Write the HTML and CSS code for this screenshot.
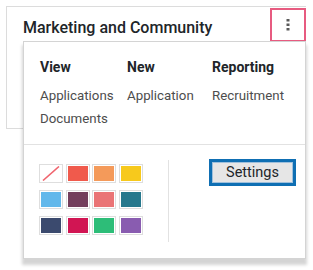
FILE: index.html
```html
<!DOCTYPE html>
<html>
<head>
<meta charset="utf-8">
<link rel="stylesheet" href="styles.css">
</head>
<body>
<div class="card">
  <div class="card-head">
    <h2 class="title">Marketing and Community</h2>
    <button class="kebab" aria-label="More">
      <svg width="4" height="12" viewBox="0 0 4 12"><rect x="0.5" y="0" width="3" height="2.5" fill="#5a5a5a"/><rect x="0.5" y="4.5" width="3" height="2.5" fill="#5a5a5a"/><rect x="0.5" y="9" width="3" height="2.5" fill="#5a5a5a"/></svg>
    </button>
  </div>
  <div class="menu">
    <div class="links">
      <div class="col">
        <div class="col-title">View</div>
        <a class="item">Applications</a>
        <a class="item">Documents</a>
      </div>
      <div class="col">
        <div class="col-title">New</div>
        <a class="item">Application</a>
      </div>
      <div class="col">
        <div class="col-title">Reporting</div>
        <a class="item">Recruitment</a>
      </div>
    </div>
    <div class="hsep"></div>
    <div class="bottom">
      <ul class="colors">
        <li class="sw none"><svg width="20" height="15" viewBox="0 0 20 15"><line x1="2" y1="14.5" x2="18" y2="0.5" stroke="#f0646e" stroke-width="1.6"/></svg></li>
        <li class="sw c1"></li>
        <li class="sw c2"></li>
        <li class="sw c3"></li>
        <li class="sw c4"></li>
        <li class="sw c5"></li>
        <li class="sw c6"></li>
        <li class="sw c7"></li>
        <li class="sw c8"></li>
        <li class="sw c9"></li>
        <li class="sw c10"></li>
        <li class="sw c11"></li>
      </ul>
      <div class="vsep"></div>
      <div class="settings-wrap">
        <button class="settings">Settings</button>
      </div>
    </div>
  </div>
</div>
</body>
</html>
```
FILE: styles.css
```css
html, body {
  margin: 0;
  padding: 0;
  background: #fff;
}
html { height: 270px; }
body {
  box-sizing: border-box;
  height: 270px;
  padding: 6px 7px 0 6px;
  font-family: Roboto, "Noto Sans", sans-serif;
  color: #212529;
}
.card {
  position: relative;
  height: 121px;
  border: 1px solid #dcdcdc;
  border-right: none;
  background: #fff;
}
.card-head {
  display: flex;
  justify-content: space-between;
  align-items: flex-start;
}
.title {
  margin: 0;
  padding: 11px 0 0 16px;
  font-size: 16px;
  font-weight: 500;
  line-height: 20px;
  color: #212529;
}
.kebab {
  margin: 1px 0 0 0;
  width: 36px;
  height: 34px;
  border: 2px solid #e75b80;
  background: #fff;
  padding: 0;
  display: flex;
  align-items: center;
  justify-content: center;
}
.kebab svg { display: block; margin-top: -1px; }
.menu {
  position: absolute;
  left: 16px;
  top: 34px;
  width: 281px;
  height: 216px;
  background: #fff;
  border: 1px solid #d4d4d4;
  box-shadow: 0 5px 3px 1px rgba(0, 0, 0, 0.17);
  display: flex;
  flex-direction: column;
  z-index: 2;
}
.links {
  display: grid;
  grid-template-columns: 87px 85px auto;
  padding: 15px 0 14px 16px;
}
.col {
  display: flex;
  flex-direction: column;
}
.col-title {
  font-size: 14px;
  font-weight: 700;
  line-height: 20px;
  color: #212529;
  margin-bottom: 7px;
}
.item {
  font-size: 13.3px;
  line-height: 23px;
  color: #4d4d4d;
  white-space: nowrap;
}
.hsep {
  height: 1px;
  background: #e2e2e2;
}
.bottom {
  display: flex;
  align-items: flex-start;
  padding-top: 15px;
}
.colors {
  list-style: none;
  margin: 5px 0 0 16px;
  padding: 0;
  display: grid;
  grid-template-columns: repeat(4, 22px);
  grid-auto-rows: 17px;
  column-gap: 4.67px;
  row-gap: 8.8px;
}
.sw {
  box-sizing: border-box;
  width: 22px;
  height: 17px;
  border: 1px solid #fff;
  outline: 1px solid #dedede;
}
.sw svg { display: block; }
.none { background: #fff; }
.c1 { background: #f05a4c; }
.c2 { background: #f49a5a; }
.c3 { background: #f7c91c; }
.c4 { background: #62b8eb; }
.c5 { background: #733e5c; }
.c6 { background: #ea7476; }
.c7 { background: #26788d; }
.c8 { background: #3b4a6e; }
.c9 { background: #d11553; }
.c10 { background: #2dbd78; }
.c11 { background: #895cb0; }
.vsep {
  width: 1px;
  height: 82px;
  margin-left: 26px;
  background: #e2e2e2;
}
.settings-wrap {
  flex: 1;
  display: flex;
  justify-content: flex-end;
  padding-right: 9px;
  padding-top: 0;
}
.settings {
  margin-top: -1px;
  box-sizing: border-box;
  width: 87px;
  height: 27px;
  border: 3px solid #0f6fb3;
  box-shadow: inset 0 0 0 1px #9fc0dc;
  background: #e6e6e6;
  font-family: Roboto, "Noto Sans", sans-serif;
  font-size: 14.5px;
  color: #212529;
  padding: 0;
}
```
